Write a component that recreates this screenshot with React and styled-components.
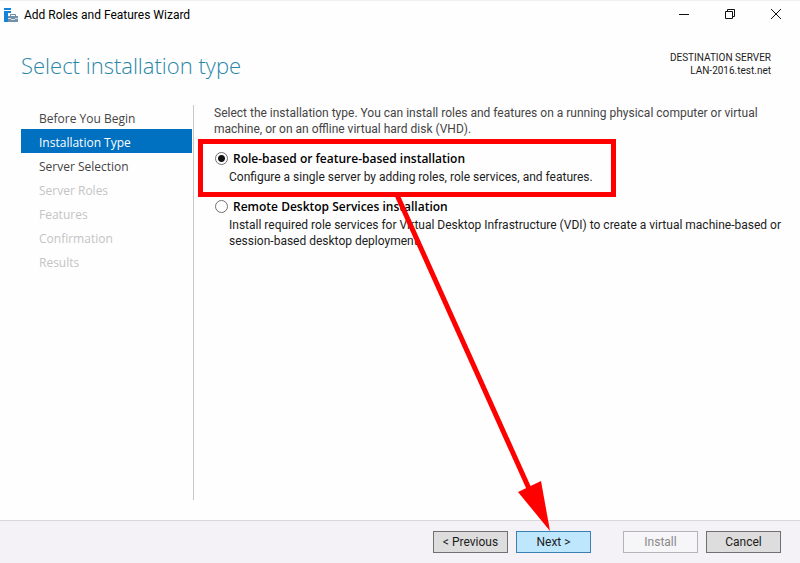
import React, { useState } from 'react';
import styled, { createGlobalStyle } from 'styled-components';

const steps = [
    { name: 'Before You Begin', state: 'done' },
    { name: 'Installation Type', state: 'active' },
    { name: 'Server Selection', state: 'done' },
    { name: 'Server Roles', state: 'disabled' },
    { name: 'Features', state: 'disabled' },
    { name: 'Confirmation', state: 'disabled' },
    { name: 'Results', state: 'disabled' },
];

const App = () => {
    const [type, setType] = useState('role');

    return (
        <>
            <GlobalStyle />
            <Window>
                <TitleBar>
                    <svg width={16} height={16} viewBox="0 0 16 16">
                        <path d="M1 1h7v2H1zM1 4h7v2H5v9H1z" fill="#1683d8" />
                        <path d="M7.5 9V7.5h5V9" fill="none" stroke="#6f8ba3" strokeWidth={1} />
                        <path d="M5 9h10v6H5z" fill="#7290a8" />
                        <path d="M5 11.5h3M12 11.5h3M8 12.5h4" stroke="#d5e0e8" strokeWidth={1} />
                    </svg>
                    <Caption>Add Roles and Features Wizard</Caption>
                    <WindowButton aria-label="Minimize">
                        <svg width={12} height={12} viewBox="0 0 12 12"><path d="M1 6.5h10" /></svg>
                    </WindowButton>
                    <WindowButton aria-label="Restore">
                        <svg width={12} height={12} viewBox="0 0 12 12"><path d="M1.5 3.5h7v7h-7zM3.5 3.5v-2h7v7h-2" /></svg>
                    </WindowButton>
                    <WindowButton aria-label="Close">
                        <svg width={12} height={12} viewBox="0 0 12 12"><path d="M1 1l10 10M11 1L1 11" /></svg>
                    </WindowButton>
                </TitleBar>

                <Header>
                    <Title>Select installation type</Title>
                    <Server>
                        <div>DESTINATION SERVER</div>
                        <div>LAN-2016.test.net</div>
                    </Server>
                </Header>

                <Body>
                    <Steps>
                        {steps.map((step) => (
                            <Step key={step.name} $state={step.state}>{step.name}</Step>
                        ))}
                    </Steps>
                    <Content>
                        <Intro>
                            Select the installation type. You can install roles and features on a running physical computer or virtual<br />
                            machine, or on an offline virtual hard disk (VHD).
                        </Intro>
                        <Option $marked>
                            <Radio type="radio" id="role" name="type" checked={type === 'role'} onChange={() => setType('role')} />
                            <OptionLabel htmlFor="role">Role-based or feature-based installation</OptionLabel>
                            <OptionText>Configure a single server by adding roles, role services, and features.</OptionText>
                        </Option>
                        <Option>
                            <Radio type="radio" id="remote" name="type" checked={type === 'remote'} onChange={() => setType('remote')} />
                            <OptionLabel htmlFor="remote">Remote Desktop Services installation</OptionLabel>
                            <OptionText>
                                Install required role services for Virtual Desktop Infrastructure (VDI) to create a virtual machine-based or<br />
                                session-based desktop deployment.
                            </OptionText>
                        </Option>
                        <Arrow width={160} height={340} viewBox="0 0 160 340">
                            <path d="M4 0L138 298" stroke="#f00" strokeWidth={5} />
                            <path d="M157 336L125 297L148 286z" fill="#f00" />
                        </Arrow>
                    </Content>
                </Body>

                <Footer>
                    <Button>&lt; Previous</Button>
                    <Button $primary>Next &gt;</Button>
                    <Spacer />
                    <Button disabled>Install</Button>
                    <Button>Cancel</Button>
                </Footer>
            </Window>
        </>
    );
}

const GlobalStyle = createGlobalStyle`
  *, *::after {
   box-sizing: border-box;
  }

  body {
   margin: 0;
   background: #fefefe;
   color: #1c1c1c;
   font: 12px/16px Roboto, "Open Sans", sans-serif;
  }`;

const Window = styled.div`
  display: flex;
  flex-direction: column;
  min-height: 100vh;
  border-top: 1px solid #f0f0f0;
`;

const TitleBar = styled.div`
  display: flex;
  align-items: center;
  height: 28px;
  padding: 0 1px 0 3px;
`;

const Caption = styled.span`
  flex: 1;
  padding-left: 5px;
  color: #000;
`;

const WindowButton = styled.button`
  display: grid;
  place-items: center;
  width: 46px;
  height: 28px;
  padding: 0 0 2px;
  border: 0;
  background: none;

  svg {
   fill: none;
   stroke: #111;
   stroke-width: 1;
  }
`;

const Header = styled.header`
  display: flex;
  justify-content: space-between;
  height: 76px;
  padding: 19px 29px 0 21px;
`;

const Title = styled.h1`
  margin: 0;
  color: #2a86a8;
  font: 300 22px/34px "Open Sans", sans-serif;
`;

const Server = styled.div`
  padding-top: 3px;
  font-size: 10px;
  line-height: 13px;
  text-align: right;
`;

const Body = styled.main`
  flex: 1;
  display: flex;
  padding: 0 12px 20px 21px;
`;

const Steps = styled.ul`
  flex: 0 0 173px;
  margin: 0;
  padding: 0 1px 0 0;
  border-right: 1px solid #c8c8c8;
  list-style: none;
`;

const Step = styled.li`
  height: 24px;
  padding: 2px 0 0 18px;
  font: 12px/24px "Open Sans", sans-serif;
  color: ${({ $state }) => ({ done: '#444', active: '#fff', disabled: '#c4c4c4' })[$state]};
  background: ${({ $state }) => ($state === 'active' ? '#0070c0' : 'none')};
`;

const Content = styled.section`
  position: relative;
  flex: 1;
  padding-left: 20px;
`;

const Intro = styled.p`
  margin: 0;
  color: #444;
  white-space: nowrap;
`;

const Option = styled.div`
  position: relative;
  display: grid;
  grid-template-columns: 15px 1fr;
  grid-template-rows: 20px auto;
  align-items: center;
  margin-top: 12px;

  &::after {
   content: '';
   display: ${({ $marked }) => ($marked ? 'block' : 'none')};
   position: absolute;
   top: -10px;
   left: -16px;
   width: 418px;
   height: 58px;
   border: 5px solid #f00;
   pointer-events: none;
  }
`;

const Radio = styled.input`
  appearance: none;
  width: 13px;
  height: 13px;
  margin: 0 0 2px 1px;
  border: 1px solid #707070;
  border-radius: 50%;
  background: #fff;

  &:checked {
   background: radial-gradient(circle, #111 3px, #fff 4px);
  }
`;

const OptionLabel = styled.label`
  padding-left: 4px;
  color: #000;
  font-family: "Open Sans", sans-serif;
  font-weight: 600;
`;

const OptionText = styled.p`
  grid-column: 2;
  margin: 0;
  white-space: nowrap;
`;

/* runs from the marked option down to the Next button */
const Arrow = styled.svg`
  position: absolute;
  top: 90px;
  left: 199px;
  pointer-events: none;
`;

const Footer = styled.footer`
  display: flex;
  justify-content: flex-end;
  gap: 8px;
  height: 43px;
  padding: 10px 19px 0;
  border-top: 1px solid #d9d7da;
  background: #f4f2f6;
`;

const Spacer = styled.span`
  width: 16px;
`;

const Button = styled.button`
  width: 75px;
  height: 22px;
  padding: 0;
  border: 1px solid ${({ $primary }) => ($primary ? '#3c7fb1' : '#707070')};
  background: ${({ $primary }) => ($primary ? '#bee6fd' : '#ddd')};
  color: #1c1c1c;
  font: inherit;

  &:disabled {
   border-color: #b4b4b4;
   background: #f6f5f7;
   color: #8a8a8a;
  }
`;

export default App;
